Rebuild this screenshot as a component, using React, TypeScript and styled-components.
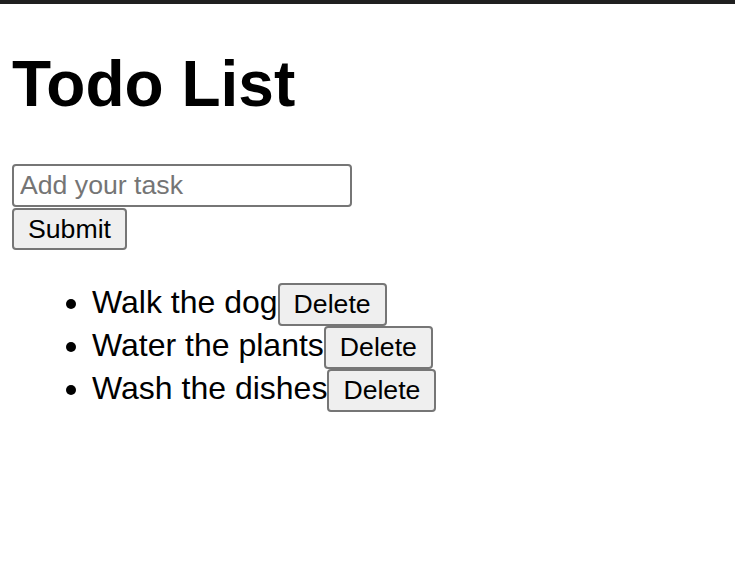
import React, { useState } from "react";
import styled, { createGlobalStyle } from "styled-components";

const GlobalStyle = createGlobalStyle`
  html, body {
    margin: 0;
    padding: 0;
    background: #ffffff;
  }
  body {
    font-family: "Liberation Sans", Arial, sans-serif;
    font-size: 32px;
    color: #000000;
  }
`;

const TopBar = styled.div`
  height: 4px;
  background: #1f1f1f;
`;

const Page = styled.main`
  padding: 0 12px;
`;

const Title = styled.h1`
  font-size: 64px;
  font-weight: bold;
  margin: 42.88px 0 43.5px;
  line-height: normal;
`;

const Form = styled.form`
  display: flex;
  flex-direction: column;
  align-items: flex-start;
  gap: 0.7px;
  margin: 0;
`;

const TaskInput = styled.input`
  box-sizing: border-box;
  width: 340px;
  height: 42.67px;
  font-family: "Liberation Sans", Arial, sans-serif;
  font-size: 26.67px;
  line-height: normal;
  padding: 4px 6px;
  border: 2px solid #767676;
  border-radius: 4px;
  background: #ffffff;
  color: #000000;
  outline: none;

  &::placeholder {
    color: #757575;
  }
`;

const Button = styled.button`
  box-sizing: border-box;
  height: 42.67px;
  font-family: "Liberation Sans", Arial, sans-serif;
  font-size: 26.67px;
  line-height: normal;
  padding: 4px 14px;
  border: 2px solid #767676;
  border-radius: 4px;
  background: #efefef;
  color: #000000;
  cursor: pointer;
  vertical-align: baseline;
`;

const List = styled.ul`
  margin: 33px 0 32px;
  padding-left: 80px;
  list-style: disc;
`;

const Item = styled.li`
  line-height: normal;
  min-height: 43px;
`;

export default function App() {
  const [tasks, setTasks] = useState<string[]>([
    "Walk the dog",
    "Water the plants",
    "Wash the dishes",
  ]);
  const [value, setValue] = useState("");

  const submit = (e: React.FormEvent) => {
    e.preventDefault();
    if (!value.trim()) return;
    setTasks([...tasks, value.trim()]);
    setValue("");
  };

  return (
    <>
      <GlobalStyle />
      <TopBar />
      <Page>
        <Title>Todo List</Title>
        <Form onSubmit={submit}>
          <TaskInput
            placeholder="Add your task"
            value={value}
            onChange={(e) => setValue(e.target.value)}
          />
          <Button type="submit">Submit</Button>
        </Form>
        <List>
          {tasks.map((t, i) => (
            <Item key={i}>
              {t}
              <Button
                type="button"
                onClick={() => setTasks(tasks.filter((_, j) => j !== i))}
              >
                Delete
              </Button>
            </Item>
          ))}
        </List>
      </Page>
    </>
  );
}
